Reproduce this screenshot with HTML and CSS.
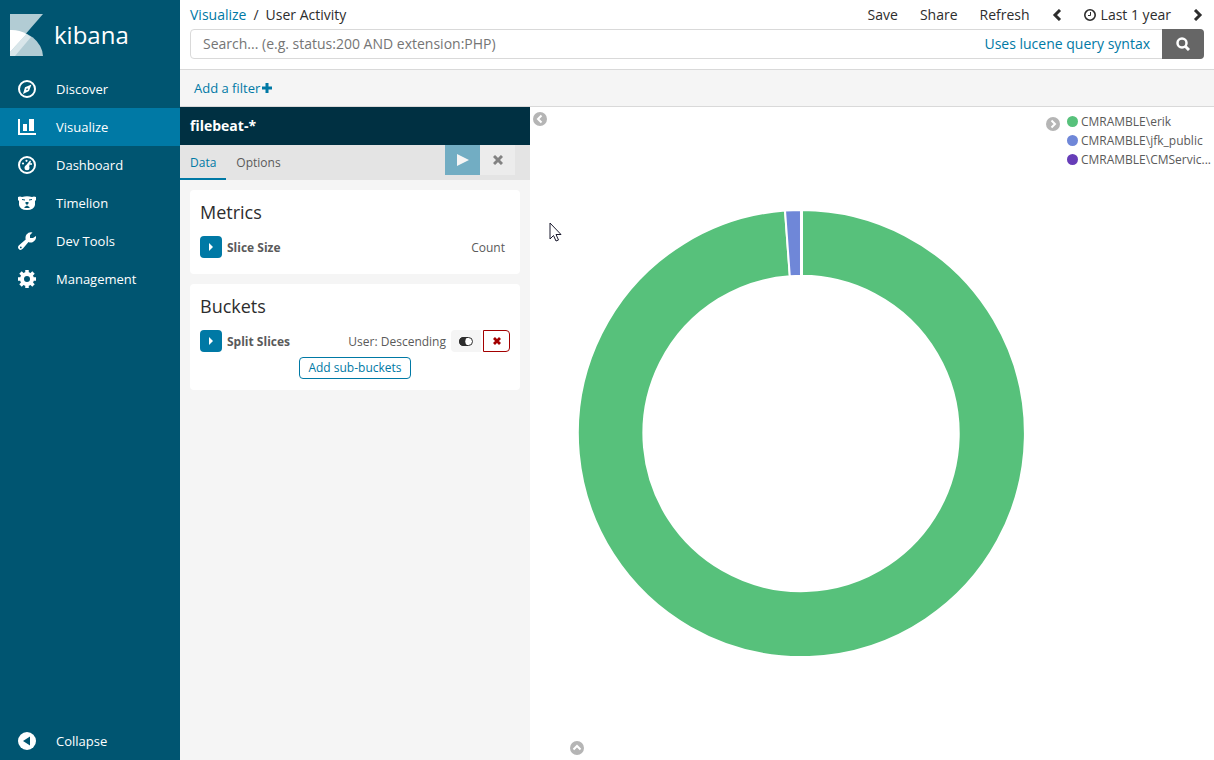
FILE: index.html
```html
<!DOCTYPE html>
<html lang="en">
<head>
    <meta charset="UTF-8">
    <meta name="viewport" content="width=device-width, initial-scale=1.0">
    <title>User Activity - Kibana</title>
    <link rel="stylesheet" href="styles.css">
</head>
<body>
    <div class="app">
        <nav class="sidebar">
            <a href="#" class="logo">
                <svg class="logo-mark" width="33" height="42" viewBox="0 0 33 42">
                    <path d="M0 0H33L0 38Z" fill="#b2ccd4"/>
                    <path d="M0 16A33 27 0 0 1 33 42H0Z" fill="#b2ccd4"/>
                    <path d="M0 16Q9 15.500 16.500 20L0 38Z" fill="#fff"/>
                    <path d="M16.500 20L21 23L5 42H0V38Z" fill="#d9e6ea"/>
                </svg>
                <span class="logo-text">kibana</span>
            </a>
            <a href="#" class="nav-link">
                <svg class="nav-icon" viewBox="0 0 18 18">
                    <circle cx="9" cy="9" r="8" fill="none" stroke="#fff" stroke-width="2"/>
                    <path fill="#fff" fill-rule="evenodd" d="M13.500 4.500L11 11L5 14L7 7.200ZM9 8L8 10.300L10.200 9.500Z"/>
                </svg>
                <span>Discover</span>
            </a>
            <a href="#" class="nav-link active">
                <svg class="nav-icon" viewBox="0 0 18 18">
                    <path fill="#fff" d="M0 1H2V15H18V17H0ZM5 6H9V13H5ZM11 1H16V13H11Z"/>
                </svg>
                <span>Visualize</span>
            </a>
            <a href="#" class="nav-link">
                <svg class="nav-icon" viewBox="0 0 18 18">
                    <circle cx="9" cy="9" r="8" fill="none" stroke="#fff" stroke-width="2"/>
                    <g fill="#fff">
                        <circle cx="5" cy="7.500" r="1.100"/>
                        <circle cx="8.500" cy="4.800" r="1.100"/>
                        <circle cx="13" cy="8" r="1.100"/>
                        <circle cx="9" cy="11.800" r="2.500"/>
                        <path d="M7.500 10L12 4.500L13 5.200L10.500 12Z"/>
                    </g>
                </svg>
                <span>Dashboard</span>
            </a>
            <a href="#" class="nav-link">
                <svg class="nav-icon" viewBox="0 0 18 18">
                    <path fill="#fff" d="M0 3Q2 2 4 3Q9 1.500 14 3Q16 2 18 3V6L17 7V11Q16 16 9 16Q2 16 1 11V7L0 6Z"/>
                    <path fill="#005571" d="M4 5L7 5.500V6.500L4 6ZM14 5L11 5.500V6.500L14 6ZM7.500 8H10.500V9.500L9 11L7.500 9.500ZM6.500 13L9 11.500L11.500 13V14H6.500Z"/>
                </svg>
                <span>Timelion</span>
            </a>
            <a href="#" class="nav-link">
                <svg class="nav-icon" viewBox="0 0 18 18">
                    <path fill="#fff" fill-rule="evenodd" d="M14.500 0.500L12 3V6H15L18 4Q18.500 8.500 15 10Q12.500 11 10.500 10L5 16.500Q2.500 19 0.800 17Q-1 15 1.300 13L7.700 7.500Q7 4.500 8.500 2.500Q11 -0.500 14.500 0.500ZM2.800 14.500A0.900 0.900 0 1 0 2.800 16.300A0.900 0.900 0 1 0 2.800 14.500Z"/>
                </svg>
                <span>Dev Tools</span>
            </a>
            <a href="#" class="nav-link">
                <svg class="nav-icon" viewBox="0 0 18 18">
                    <circle cx="9" cy="9" r="5" fill="none" stroke="#fff" stroke-width="4"/>
                    <path stroke="#fff" stroke-width="3.500" d="M9 0V4M9 14V18M0 9H4M14 9H18M2.500 2.500L5.500 5.500M12.500 12.500L15.500 15.500M15.500 2.500L12.500 5.500M5.500 12.500L2.500 15.500"/>
                </svg>
                <span>Management</span>
            </a>
            <button type="button" class="nav-link collapse">
                <svg class="nav-icon" viewBox="0 0 18 18">
                    <circle cx="9" cy="9" r="9" fill="#fff"/>
                    <path fill="#005571" d="M5 9L12 4.500V13.500Z"/>
                </svg>
                <span>Collapse</span>
            </button>
        </nav>

        <div class="content">
            <header class="topbar">
                <div class="topbar-row">
                    <div class="breadcrumbs">
                        <a href="#">Visualize</a>
                        <span>/</span>
                        <span class="current">User Activity</span>
                    </div>
                    <div class="menu">
                        <button type="button">Save</button>
                        <button type="button">Share</button>
                        <button type="button">Refresh</button>
                        <button type="button" class="step" aria-label="Previous period">
                            <svg width="10" height="12" viewBox="0 0 10 12"><path d="M8 1L3 6L8 11" fill="none" stroke="#2d2d2d" stroke-width="3"/></svg>
                        </button>
                        <button type="button" class="time">
                            <svg width="12" height="12" viewBox="0 0 12 12"><circle cx="6" cy="6" r="5.200" fill="none" stroke="#2d2d2d" stroke-width="1.600"/><path d="M6.500 3V6.500H4" fill="none" stroke="#2d2d2d"/></svg>
                            Last 1 year
                        </button>
                        <button type="button" class="step" aria-label="Next period">
                            <svg width="10" height="12" viewBox="0 0 10 12"><path d="M2 1L7 6L2 11" fill="none" stroke="#2d2d2d" stroke-width="3"/></svg>
                        </button>
                    </div>
                </div>
                <form class="search">
                    <input type="text" aria-label="Search" placeholder="Search... (e.g. status:200 AND extension:PHP)">
                    <a href="#">Uses lucene query syntax</a>
                    <button type="button" aria-label="Submit search">
                        <svg width="14" height="14" viewBox="0 0 14 14"><circle cx="6" cy="6" r="4.500" fill="none" stroke="#fff" stroke-width="2.500"/><path d="M9 9L13 13" stroke="#fff" stroke-width="3"/></svg>
                    </button>
                </form>
            </header>

            <div class="filter-bar">
                <a href="#">Add a filter
                    <svg width="10" height="10" viewBox="0 0 10 10"><path d="M5 0V10M0 5H10" stroke="#0079a5" stroke-width="3"/></svg>
                </a>
            </div>

            <div class="workspace">
                <aside class="editor">
                    <div class="index-name">filebeat-*</div>
                    <div class="tabs">
                        <a href="#" class="tab selected">Data</a>
                        <a href="#" class="tab">Options</a>
                        <div class="tab-actions">
                            <button type="button" class="apply" aria-label="Apply changes">
                                <svg width="12" height="12" viewBox="0 0 12 12"><path d="M0 0L12 6L0 12Z" fill="#f5f5f5"/></svg>
                            </button>
                            <button type="button" class="discard" aria-label="Discard changes">
                                <svg width="10" height="10" viewBox="0 0 10 10"><path d="M1 1L9 9M9 1L1 9" stroke="#828282" stroke-width="3"/></svg>
                            </button>
                        </div>
                    </div>
                    <section class="panel">
                        <h2>Metrics</h2>
                        <div class="agg">
                            <button type="button" class="toggle" aria-label="Expand slice size">
                                <svg width="4" height="8" viewBox="0 0 4 8"><path d="M0 0L4 4L0 8Z" fill="#fff"/></svg>
                            </button>
                            <strong>Slice Size</strong>
                            <span class="agg-value">Count</span>
                        </div>
                    </section>
                    <section class="panel">
                        <h2>Buckets</h2>
                        <div class="agg">
                            <button type="button" class="toggle" aria-label="Expand split slices">
                                <svg width="4" height="8" viewBox="0 0 4 8"><path d="M0 0L4 4L0 8Z" fill="#fff"/></svg>
                            </button>
                            <strong>Split Slices</strong>
                            <span class="agg-value">User: Descending</span>
                            <div class="agg-actions">
                                <button type="button" class="disable" aria-label="Disable aggregation">
                                    <svg width="14" height="9" viewBox="0 0 14 9"><rect x="0.500" y="0.500" width="13" height="8" rx="4" fill="#fff" stroke="#2d2d2d"/><path d="M4.500 0H9A5 5 0 0 0 9 9H4.500A4.500 4.500 0 0 1 4.500 0Z" fill="#2d2d2d"/></svg>
                                </button>
                                <button type="button" class="remove" aria-label="Remove aggregation">
                                    <svg width="8" height="8" viewBox="0 0 8 8"><path d="M1 1L7 7M7 1L1 7" stroke="#a30000" stroke-width="2.800"/></svg>
                                </button>
                            </div>
                        </div>
                        <button type="button" class="add-bucket">Add sub-buckets</button>
                    </section>
                </aside>

                <main class="vis">
                    <button type="button" class="circle-btn" aria-label="Hide editor">
                        <svg width="14" height="14" viewBox="0 0 14 14"><circle cx="7" cy="7" r="7" fill="#b5b5b5"/><path d="M8.500 3.500L5 7L8.500 10.500" fill="none" stroke="#fff" stroke-width="2"/></svg>
                    </button>
                    <div class="chart">
                        <svg class="donut" viewBox="-245 -245 490 490" role="img" aria-label="User activity by user">
                            <g stroke="#fff" stroke-width="2">
                                <path fill="#57c17b" d="M0.500 -224A224 224 0 1 1 -16.500 -223.400L-11.700 -157.600A158 158 0 1 0 0.500 -158Z"/>
                                <path fill="#6f87d8" d="M-16.500 -223.400A224 224 0 0 1 -0.500 -224V-158A158 158 0 0 0 -11.700 -157.600Z"/>
                                <path fill="#663db8" d="M-0.500 -224H0.500V-158H-0.500Z"/>
                            </g>
                        </svg>
                        <button type="button" class="circle-btn spy" aria-label="Show data table">
                            <svg width="14" height="14" viewBox="0 0 14 14"><circle cx="7" cy="7" r="7" fill="#b5b5b5"/><path d="M3.500 8.500L7 5L10.500 8.500" fill="none" stroke="#fff" stroke-width="2"/></svg>
                        </button>
                    </div>
                    <div class="legend">
                        <button type="button" class="circle-btn" aria-label="Hide legend">
                            <svg width="14" height="14" viewBox="0 0 14 14"><circle cx="7" cy="7" r="7" fill="#b5b5b5"/><path d="M5.500 3.500L9 7L5.500 10.500" fill="none" stroke="#fff" stroke-width="2"/></svg>
                        </button>
                        <ul>
                            <li><i class="dot green"></i>CMRAMBLE\erik</li>
                            <li><i class="dot blue"></i>CMRAMBLE\jfk_public</li>
                            <li><i class="dot purple"></i>CMRAMBLE\CMServic...</li>
                        </ul>
                    </div>
                    <svg class="cursor" width="13" height="20" viewBox="0 0 13 20"><path d="M1 1V17L4.500 13.500L7 19L9.500 18L7 12.500H12Z" fill="#fff" stroke="#1a1a2e"/></svg>
                </main>
            </div>
        </div>
    </div>
</body>
</html>
```

FILE: styles.css
```css
* {
    box-sizing: border-box;
}
body {
    margin: 0;
    font-family: "Open Sans", "Liberation Sans", sans-serif;
    font-size: 14px;
    line-height: 20px;
    color: #2d2d2d;
    background: #fff;
}
a {
    color: #0079a5;
    text-decoration: none;
}
button {
    font: inherit;
    color: inherit;
    background: none;
    border: none;
    padding: 0;
    cursor: pointer;
}
svg {
    display: block;
    flex-shrink: 0;
}
.app {
    display: flex;
    min-height: 100vh;
}

/* Sidebar */
.sidebar {
    display: flex;
    flex-direction: column;
    width: 180px;
    flex-shrink: 0;
    background: #005571;
}
.logo {
    display: flex;
    gap: 11px;
    height: 70px;
    padding: 14px 10px;
    color: #fff;
}
.logo-text {
    font-size: 24px;
    line-height: 42px;
    font-weight: 500;
}
.nav-link {
    display: flex;
    align-items: center;
    gap: 20px;
    height: 38px;
    padding: 0 18px 1px;
    font-size: 13px;
    color: #fff;
}
.nav-link.active {
    background: #0079a5;
}
.nav-icon {
    width: 18px;
    height: 18px;
}
.collapse {
    margin-top: auto;
}

/* Top bar */
.content {
    display: flex;
    flex-direction: column;
    flex: 1;
    min-width: 0;
}
.topbar {
    padding: 0 10px 10px;
    border-bottom: 1px solid #d9d9d9;
}
.topbar-row {
    display: flex;
    justify-content: space-between;
    align-items: center;
    height: 29px;
}
.breadcrumbs {
    display: flex;
    gap: 7px;
}
.menu {
    display: flex;
    align-items: center;
    gap: 22px;
    padding-right: 1px;
}
.time {
    display: flex;
    align-items: center;
    gap: 5px;
}
.search {
    display: flex;
    align-items: center;
    height: 30px;
    border: 1px solid #d9d9d9;
    border-radius: 4px;
}
.search input {
    flex: 1;
    min-width: 0;
    height: 28px;
    padding: 0 12px 1px;
    font: inherit;
    color: #2d2d2d;
    background: none;
    border: none;
}
.search input::placeholder {
    color: #757575;
}
.search a {
    margin-right: 12px;
}
.search button {
    display: flex;
    align-items: center;
    justify-content: center;
    width: 42px;
    height: 30px;
    margin-right: -1px;
    background: #666;
    border-radius: 0 4px 4px 0;
}
.filter-bar {
    display: flex;
    align-items: center;
    height: 37px;
    padding: 0 14px;
    font-size: 13px;
    background: #f5f5f5;
    border-bottom: 1px solid #d9d9d9;
}
.filter-bar a {
    display: flex;
    align-items: center;
    gap: 2px;
}

/* Editor */
.workspace {
    display: flex;
    flex: 1;
}
.editor {
    width: 350px;
    flex-shrink: 0;
    background: #f5f5f5;
}
.index-name {
    padding: 9px 10px;
    font-weight: 700;
    color: #fff;
    background: #003042;
}
.tabs {
    display: flex;
    height: 35px;
    font-size: 12px;
    background: #e4e4e4;
}
.tab {
    padding: 8px 10px;
    color: #5a5a5a;
}
.tab.selected {
    color: #0079a5;
    border-bottom: 2px solid #0079a5;
}
.tab-actions {
    display: flex;
    height: 30px;
    margin-left: auto;
    margin-right: 15px;
}
.tab-actions button {
    display: flex;
    align-items: center;
    justify-content: center;
    width: 35px;
}
.apply {
    background: #72adc3;
}
.discard {
    background: #ececec;
}
.panel {
    margin: 10px;
    padding: 10px;
    background: #fff;
    border-radius: 4px;
}
.panel h2 {
    margin: 0 0 12px;
    font-size: 18px;
    line-height: 24px;
    font-weight: 400;
}
.agg {
    display: flex;
    align-items: center;
    height: 22px;
    margin-bottom: 5px;
    font-size: 12px;
    line-height: 22px;
    color: #5a5a5a;
}
.agg:last-child {
    margin-bottom: 6px;
}
.toggle {
    display: flex;
    align-items: center;
    justify-content: center;
    width: 22px;
    height: 22px;
    margin-right: 5px;
    background: #0079a5;
    border-radius: 4px;
}
.agg strong,
.agg-value {
    padding-top: 1px;
}
.agg-value {
    margin-left: auto;
    padding-right: 5px;
}
.agg-actions {
    display: flex;
    gap: 2px;
}
.agg-actions button {
    display: flex;
    align-items: center;
    justify-content: center;
    height: 22px;
}
.disable {
    width: 30px;
    background: #f5f5f5;
    border-radius: 4px 0 0 4px;
}
.agg-actions .remove {
    width: 27px;
    border: 1px solid #a30000;
    border-radius: 0 4px 4px 0;
}
.add-bucket {
    display: block;
    height: 22px;
    margin: 0 auto 1px;
    padding: 0 8px;
    font-size: 12px;
    color: #0079a5;
    border: 1px solid #0079a5;
    border-radius: 4px;
}

/* Visualization */
.vis {
    position: relative;
    display: flex;
    flex: 1;
    min-width: 0;
    padding-left: 3px;
}
.circle-btn {
    align-self: flex-start;
    margin-top: 5px;
}
.chart {
    position: relative;
    flex: 1;
    min-width: 0;
    display: flex;
    align-items: center;
    margin-left: 10px;
}
.donut {
    width: 100%;
    max-height: 100%;
}
.spy {
    position: absolute;
    left: 13px;
    bottom: 5px;
}
.legend {
    display: flex;
    gap: 7px;
    padding-top: 5px;
}
.legend ul {
    list-style: none;
    margin: 0;
    padding: 0 3px 0 0;
    font-size: 12px;
    line-height: 19px;
    color: #5a5a5a;
}
.legend li {
    display: flex;
    align-items: center;
    gap: 3px;
    white-space: nowrap;
}
.dot {
    width: 11px;
    height: 11px;
    border-radius: 50%;
}
.green {
    background: #57c17b;
}
.blue {
    background: #6f87d8;
}
.purple {
    background: #663db8;
}
.cursor {
    position: absolute;
    left: 19px;
    top: 115px;
}
```
